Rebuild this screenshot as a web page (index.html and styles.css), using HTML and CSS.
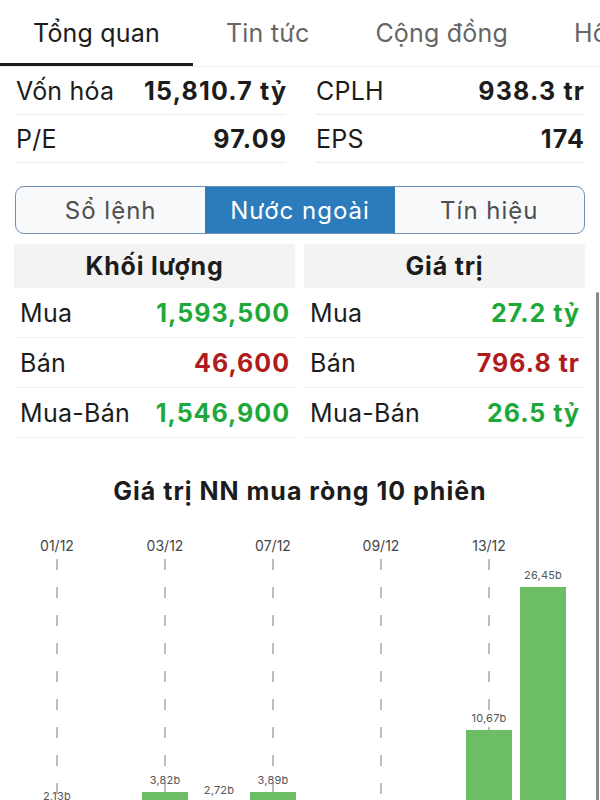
FILE: index.html
```html
<!DOCTYPE html>
<html lang="vi">
<head>
  <meta charset="UTF-8">
  <meta name="viewport" content="width=device-width, initial-scale=1.0">
  <title>Tổng quan</title>
  <link rel="stylesheet" href="styles.css">
</head>
<body>
  <div id="root">
    <!-- tab bar -->
    <nav class="tabs">
      <div class="tab active">Tổng quan</div>
      <div class="tab">Tin tức</div>
      <div class="tab">Cộng đồng</div>
      <div class="tab">Hồ sơ</div>
    </nav>

    <!-- chỉ số chính -->
    <div class="stats">
      <div class="stat-row"><span>Vốn hóa</span><b>15,810.7 tỷ</b></div>
      <div class="stat-row"><span>CPLH</span><b>938.3 tr</b></div>
      <div class="stat-row"><span>P/E</span><b>97.09</b></div>
      <div class="stat-row"><span>EPS</span><b>174</b></div>
    </div>

    <div class="segment">
      <div class="seg-item">Sổ lệnh</div>
      <div class="seg-item on">Nước ngoài</div>
      <div class="seg-item">Tín hiệu</div>
    </div>

    <div class="foreign">
      <div class="panel">
        <div class="panel-head">Khối lượng</div>
        <div class="panel-row"><span>Mua</span><b class="up">1,593,500</b></div>
        <div class="panel-row"><span>Bán</span><b class="down">46,600</b></div>
        <div class="panel-row"><span>Mua-Bán</span><b class="up">1,546,900</b></div>
      </div>
      <div class="panel">
        <div class="panel-head">Giá trị</div>
        <div class="panel-row"><span>Mua</span><b class="up">27.2 tỷ</b></div>
        <div class="panel-row"><span>Bán</span><b class="down">796.8 tr</b></div>
        <div class="panel-row"><span>Mua-Bán</span><b class="up">26.5 tỷ</b></div>
      </div>
    </div>

    <h2 class="chart-title">Giá trị NN mua ròng 10 phiên</h2>

    <!-- biểu đồ: 1 cột = 1 phiên, chiều cao bar = giá trị * 9.06px -->
    <div class="chart">
      <div class="col tick"><div class="date">01/12</div><div class="val">2,13b</div><div class="bar" style="height:19px"></div></div>
      <div class="col"><div class="date"></div></div>
      <div class="col tick"><div class="date">03/12</div><div class="val">3,82b</div><div class="bar" style="height:35px"></div></div>
      <div class="col"><div class="date"></div><div class="val">2,72b</div><div class="bar" style="height:25px"></div></div>
      <div class="col tick"><div class="date">07/12</div><div class="val">3,89b</div><div class="bar" style="height:35px"></div></div>
      <div class="col"><div class="date"></div></div>
      <div class="col tick"><div class="date">09/12</div></div>
      <div class="col"><div class="date"></div></div>
      <div class="col tick"><div class="date">13/12</div><div class="val">10,67b</div><div class="bar" style="height:97px"></div></div>
      <div class="col"><div class="date"></div><div class="val">26,45b</div><div class="bar" style="height:240px"></div></div>
    </div>

    <div class="scroll-thumb"></div>
  </div>
</body>
</html>
```

FILE: styles.css
```css
* {margin:0; padding:0; box-sizing: border-box;}
html, body {overflow: hidden;}
body {
  font-family: Inter, "Liberation Sans", sans-serif;
  color: #1c1c1c;
  background: #fff;
}
#root {
  position: relative;
  width: 600px;
  height: 800px;
  overflow: hidden;
}

/* tabs */
.tabs {
  display: flex;
  height: 67px;
  white-space: nowrap;
  border-bottom: 1px solid #f0f0f0;
}
.tab {
  padding: 18px 33px 0;
  font-size: 25px;
  line-height: 30px;
  letter-spacing: 0.2px;
  color: #666;
  border-bottom: 3px solid transparent;
}
.tab.active {
  color: #1c1c1c;
  border-bottom-color: #1c1c1c;
}

/* stats */
.stats {
  display: grid;
  grid-template-columns: 270px 268px;
  column-gap: 30px;
  padding: 0 16px;
}
.stat-row {
  display: flex;
  justify-content: space-between;
  align-items: center;
  height: 48px;
  border-bottom: 1px solid #ececec;
  font-size: 25px;
}
.stat-row span {letter-spacing: 0.2px;}
.stat-row b {font-weight: 700; letter-spacing: 1.2px; margin-right: -1.2px;}

/* segmented control */
.segment {
  display: flex;
  margin: 23px 15px 0;
  height: 48px;
  border: 1.5px solid #6f8fb4;
  border-radius: 9px;
  overflow: hidden;
  background: #f8f9fa;
}
.seg-item {
  flex: 1;
  display: flex;
  justify-content: center;
  align-items: center;
  font-size: 24px;
  letter-spacing: 1px;
  color: #4f4f4f;
}
.seg-item.on {
  background: #2c7cbd;
  color: #fff;
}

/* khối ngoại */
.foreign {
  display: flex;
  gap: 9px;
  margin: 10px 15px 0 14px;
}
.panel {flex: 1;}
.panel-head {
  height: 44px;
  background: #f3f3f3;
  text-align: center;
  font-size: 25px;
  font-weight: 700;
  line-height: 44px;
  letter-spacing: 0.8px;
}
.panel-row {
  display: flex;
  justify-content: space-between;
  align-items: center;
  height: 50px;
  padding: 0 6px;
  border-bottom: 1px solid #efefef;
  font-size: 25px;
}
.panel-row span {letter-spacing: 0.3px;}
.panel-row b {font-weight: 700; letter-spacing: 1px; margin-right: -1px;}
.up {color: #1fa83a;}
.down {color: #b01c1c;}

/* chart */
.chart-title {
  margin-top: 37px;
  text-align: center;
  font-size: 25px;
  font-weight: 700;
  line-height: 32px;
  letter-spacing: 1px;
}
.chart {
  display: grid;
  grid-template-columns: repeat(10, 54px);
  justify-content: center;
  margin-top: 22px;
  height: 298px;
}
.col {
  position: relative;
  display: flex;
  flex-direction: column;
  align-items: center;
}
.date {
  height: 30px;
  padding-top: 7px;
  font-size: 14px;
  line-height: 20px;
  color: #454545;
  margin-bottom: auto;
}
.tick::before {
  content: "";
  position: absolute;
  left: 26px;
  top: 30px;
  bottom: 0;
  width: 1.5px;
  background: repeating-linear-gradient(to bottom, #bdbdbd 0 11px, transparent 11px 28px);
}
.val {
  position: relative;
  font-size: 11px;
  line-height: 12px;
  letter-spacing: 0.2px;
  color: #555;
  margin-bottom: 6px;
}
.bar {
  position: relative;
  width: 46px;
  background: #6dbd64;
}

.scroll-thumb {
  position: absolute;
  right: 1px;
  top: 292px;
  width: 3px;
  height: 520px;
  border-radius: 2px;
  background: #8a8a8a;
}
```
